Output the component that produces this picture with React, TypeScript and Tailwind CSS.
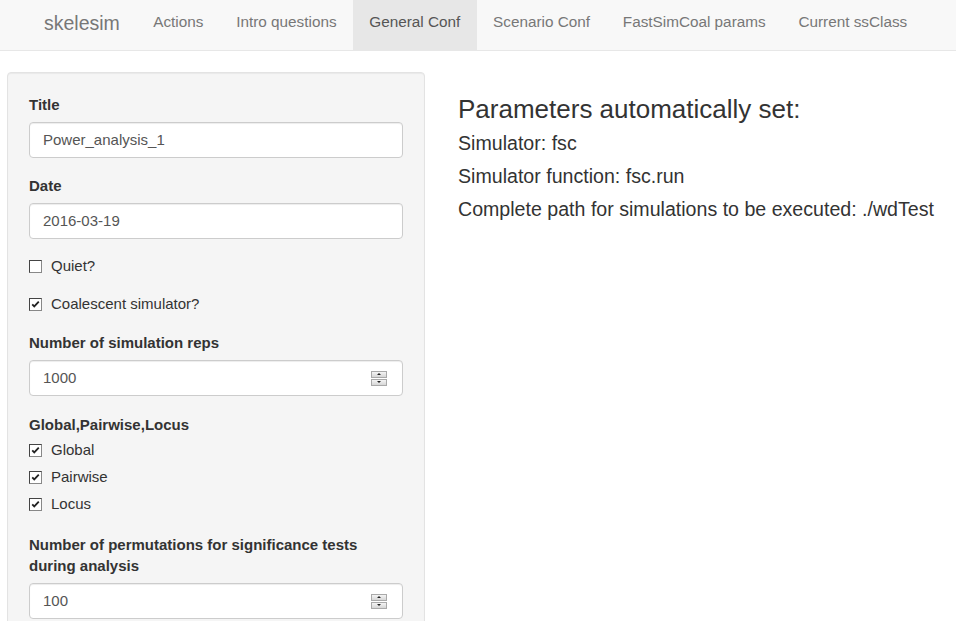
import { useState } from "react";

const navItems = [
  "Actions",
  "Intro questions",
  "General Conf",
  "Scenario Conf",
  "FastSimCoal params",
  "Current ssClass",
];

function CheckBox({ checked }: { checked: boolean }) {
  return (
    <span className="flex h-[13px] w-[13px] items-center justify-center border border-[#444] border-b-[#888] border-r-[#888] bg-white">
      {checked && (
        <svg viewBox="0 0 11 11" className="h-[9px] w-[9px]">
          <path d="M1.5 5.2 L4 7.8 L9.5 2" fill="none" stroke="#222" strokeWidth={2.2} />
        </svg>
      )}
    </span>
  );
}

function CheckRow({ label, checked, className = "" }: { label: string; checked: boolean; className?: string }) {
  return (
    <label className={`flex h-[22px] items-center gap-[9px] text-[15px] text-[#333] ${className}`}>
      <CheckBox checked={checked} />
      <span>{label}</span>
    </label>
  );
}

function Spinner() {
  return (
    <span className="flex flex-col gap-[1px]">
      <span className="flex h-[7px] w-[16px] items-center justify-center border border-[#a9a9a9] bg-gradient-to-b from-[#f4f4f4] to-[#d6d6d6]">
        <span className="h-0 w-0 border-x-[2px] border-b-[2px] border-x-transparent border-b-[#222]" />
      </span>
      <span className="flex h-[7px] w-[16px] items-center justify-center border border-[#a9a9a9] bg-gradient-to-b from-[#f4f4f4] to-[#d6d6d6]">
        <span className="h-0 w-0 border-x-[2px] border-t-[2px] border-x-transparent border-t-[#222]" />
      </span>
    </span>
  );
}

function TextField({ value, number = false }: { value: string; number?: boolean }) {
  return (
    <div className="flex h-[36px] items-center justify-between rounded-[4px] border border-[#ccc] bg-white pl-[13px] pr-[15px] text-[15px] text-[#555] shadow-[inset_0_1px_1px_rgba(0,0,0,0.075)]">
      <span>{value}</span>
      {number && <Spinner />}
    </div>
  );
}

function FieldLabel({ children, className = "" }: { children: React.ReactNode; className?: string }) {
  return (
    <div className={`text-[15px] font-bold leading-[21px] text-[#333] ${className}`}>{children}</div>
  );
}

export default function App() {
  const [active] = useState("General Conf");

  return (
    <div className="min-h-[621px] bg-white font-['Liberation_Sans',Arial,sans-serif]">
      <nav className="flex h-[51px] border-b border-[#e7e7e7] bg-[#f8f8f8] pl-[44px]">
        <div className="mr-[17px] pt-[11px] text-[19.5px] leading-[24px] text-[#777]">skelesim</div>
        {navItems.map((item) => (
          <div
            key={item}
            className={`h-[50px] px-[16.4px] pt-[12px] text-[15.3px] leading-[20px] ${
              item === active ? "bg-[#e7e7e7] text-[#555]" : "text-[#777]"
            }`}
          >
            {item}
          </div>
        ))}
      </nav>

      <div className="flex pl-[7px] pt-[21px]">
        <div className="h-[560px] w-[418px] shrink-0 overflow-hidden rounded-[4px] border border-[#e3e3e3] bg-[#f5f5f5] p-[21px] shadow-[inset_0_1px_1px_rgba(0,0,0,0.05)]">
          <FieldLabel className="mb-[7px]">Title</FieldLabel>
          <TextField value="Power_analysis_1" />

          <FieldLabel className="mt-[17px] mb-[7px]">Date</FieldLabel>
          <TextField value="2016-03-19" />

          <CheckRow label="Quiet?" checked={false} className="mt-[16px]" />
          <CheckRow label="Coalescent simulator?" checked className="mt-[16px]" />

          <FieldLabel className="mt-[17px] mb-[7px]">Number of simulation reps</FieldLabel>
          <TextField value="1000" number />

          <FieldLabel className="mt-[18px] mb-[4px]">Global,Pairwise,Locus</FieldLabel>
          <CheckRow label="Global" checked />
          <CheckRow label="Pairwise" checked className="mt-[5px]" />
          <CheckRow label="Locus" checked className="mt-[5px]" />

          <FieldLabel className="mt-[19px] mb-[7px]">
            Number of permutations for significance tests
            <br />
            during analysis
          </FieldLabel>
          <TextField value="100" number />
        </div>

        <div className="pl-[33px] pt-[22px] text-[#333]">
          <h3 className="text-[26px] leading-[30px]">Parameters automatically set:</h3>
          <div className="mt-[3px] text-[19.6px] leading-[33px]">
            <div>Simulator: fsc</div>
            <div>Simulator function: fsc.run</div>
            <div>Complete path for simulations to be executed: ./wdTest</div>
          </div>
        </div>
      </div>
    </div>
  );
}
